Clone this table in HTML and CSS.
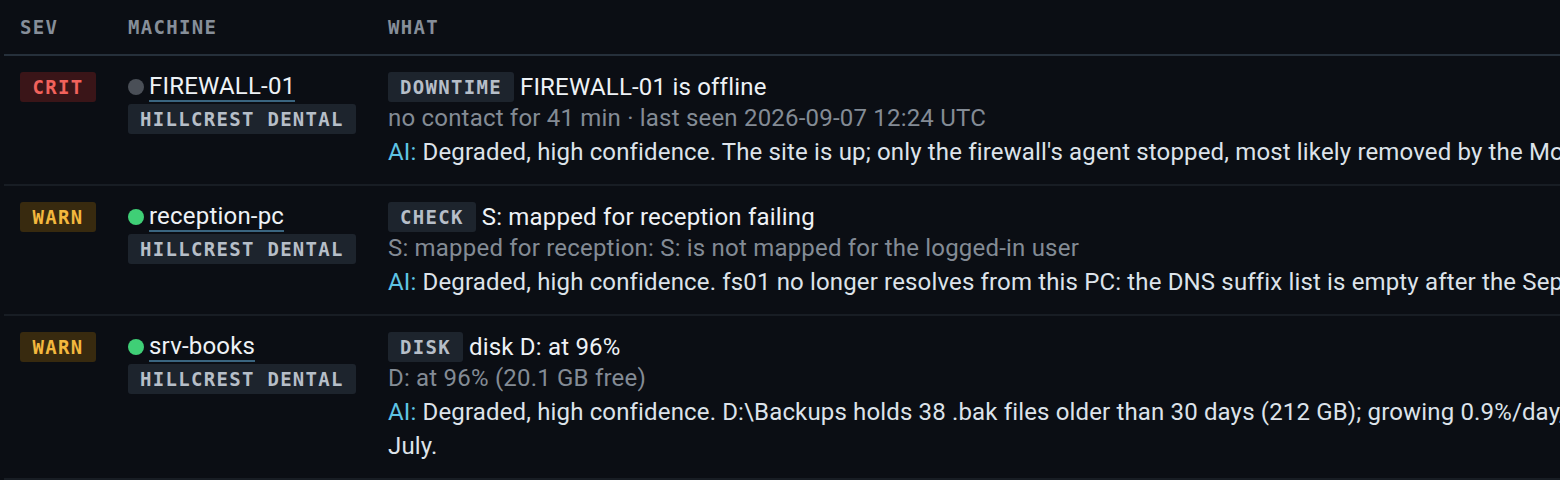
FILE: index.html
```html
<!DOCTYPE html>
<html lang="en">
<head>
<meta charset="utf-8">
<title>Alerts</title>
<link rel="stylesheet" href="styles.css">
</head>
<body>
<div class="wrap">
  <table class="alerts">
    <colgroup>
      <col class="c-sev">
      <col class="c-machine">
      <col class="c-what">
    </colgroup>
    <thead>
      <tr><th>SEV</th><th>MACHINE</th><th>WHAT</th></tr>
    </thead>
    <tbody>
      <tr>
        <td><span class="sev sev-crit">CRIT</span></td>
        <td>
          <div class="machine"><span class="dot dot-off"></span><a class="host" href="#">FIREWALL-01</a></div>
          <div class="site">HILLCREST DENTAL</div>
        </td>
        <td>
          <div class="title"><span class="kind">DOWNTIME</span><span class="headline">FIREWALL-01 is offline</span></div>
          <div class="detail">no contact for 41 min · last seen 2026-09-07 12:24 UTC</div>
          <div class="ai"><span class="ai-label">AI:</span> Degraded, high confidence. The site is up; only the firewall's agent stopped, most likely removed by the Monday firmware update.</div>
        </td>
      </tr>
      <tr>
        <td><span class="sev sev-warn">WARN</span></td>
        <td>
          <div class="machine"><span class="dot dot-on"></span><a class="host" href="#">reception-pc</a></div>
          <div class="site">HILLCREST DENTAL</div>
        </td>
        <td>
          <div class="title"><span class="kind">CHECK</span><span class="headline">S: mapped for reception failing</span></div>
          <div class="detail">S: mapped for reception: S: is not mapped for the logged-in user</div>
          <div class="ai"><span class="ai-label">AI:</span> Degraded, high confidence. fs01 no longer resolves from this PC: the DNS suffix list is empty after the September patch.</div>
        </td>
      </tr>
      <tr>
        <td><span class="sev sev-warn">WARN</span></td>
        <td>
          <div class="machine"><span class="dot dot-on"></span><a class="host" href="#">srv-books</a></div>
          <div class="site">HILLCREST DENTAL</div>
        </td>
        <td>
          <div class="title"><span class="kind">DISK</span><span class="headline">disk D: at 96%</span></div>
          <div class="detail">D: at 96% (20.1 GB free)</div>
          <div class="ai"><span class="keep"><span class="ai-label">AI:</span> Degraded, high confidence. D:\Backups holds 38 .bak files older than 30 days (212 GB); growing 0.9%/day, so D: fills in about four days. The cleanup task has failed since early</span> July.</div>
        </td>
      </tr>
    </tbody>
  </table>
</div>
</body>
</html>
```

FILE: styles.css
```css
html, body {
  margin: 0;
  padding: 0;
  background: #0b0e14;
}

body {
  overflow: hidden;
  font-family: Roboto, "Noto Sans", sans-serif;
  font-size: 24px;
  letter-spacing: 0.2px;
  color: #e6ebf1;
}

.wrap {
  width: 100%;
  overflow: hidden;
  padding-left: 4px;
  box-sizing: border-box;
}

.alerts {
  border-collapse: collapse;
  table-layout: fixed;
  width: 2100px;
}

.c-sev { width: 108px; }
.c-machine { width: 260px; }
.c-what { width: 1732px; }

.alerts th {
  height: 54px;
  padding: 0 16px;
  text-align: left;
  vertical-align: middle;
  font-family: "DejaVu Sans Mono", monospace;
  font-weight: bold;
  font-size: 19px;
  letter-spacing: 1.3px;
  color: #868e99;
  border-bottom: 2px solid #26303b;
}

.alerts td {
  padding: 16px 16px 15px;
  vertical-align: top;
  border-bottom: 2px solid #181d24;
}

.sev,
.site,
.kind {
  display: inline-block;
  font-family: "DejaVu Sans Mono", monospace;
  font-weight: bold;
  font-size: 19px;
  letter-spacing: 1.3px;
  line-height: 24px;
  padding: 3px 12px;
  border-radius: 3px;
}

.sev { padding: 3px 12.5px; }

.sev-crit {
  background: #3a1518;
  color: #f2625c;
}

.sev-warn {
  background: #382a0f;
  color: #f3b83e;
}

.machine {
  display: flex;
  align-items: center;
  height: 30px;
}

.dot {
  width: 16px;
  height: 16px;
  border-radius: 50%;
  margin-right: 5px;
  flex: none;
}

.dot-off { background: #4a4f57; }
.dot-on { background: #3fcf76; }

.host {
  color: #eef2f6;
  text-decoration: none;
  line-height: 27px;
  border-bottom: 2px solid #3a6580;
}

.site {
  margin-top: 2px;
  background: #1d242d;
  color: #b6bec8;
}

.title {
  display: flex;
  align-items: center;
  height: 30px;
}

.kind {
  background: #1d242d;
  color: #b6bec8;
  margin-right: 6px;
}

.headline {
  color: #eef2f6;
  line-height: 30px;
}

.detail {
  line-height: 33.6px;
  color: #838b95;
}

.ai {
  line-height: 33.6px;
  letter-spacing: 0.15px;
  color: #dde3ea;
}

.keep {
  white-space: nowrap;
}

.ai-label {
  color: #5ec4e4;
}
```
